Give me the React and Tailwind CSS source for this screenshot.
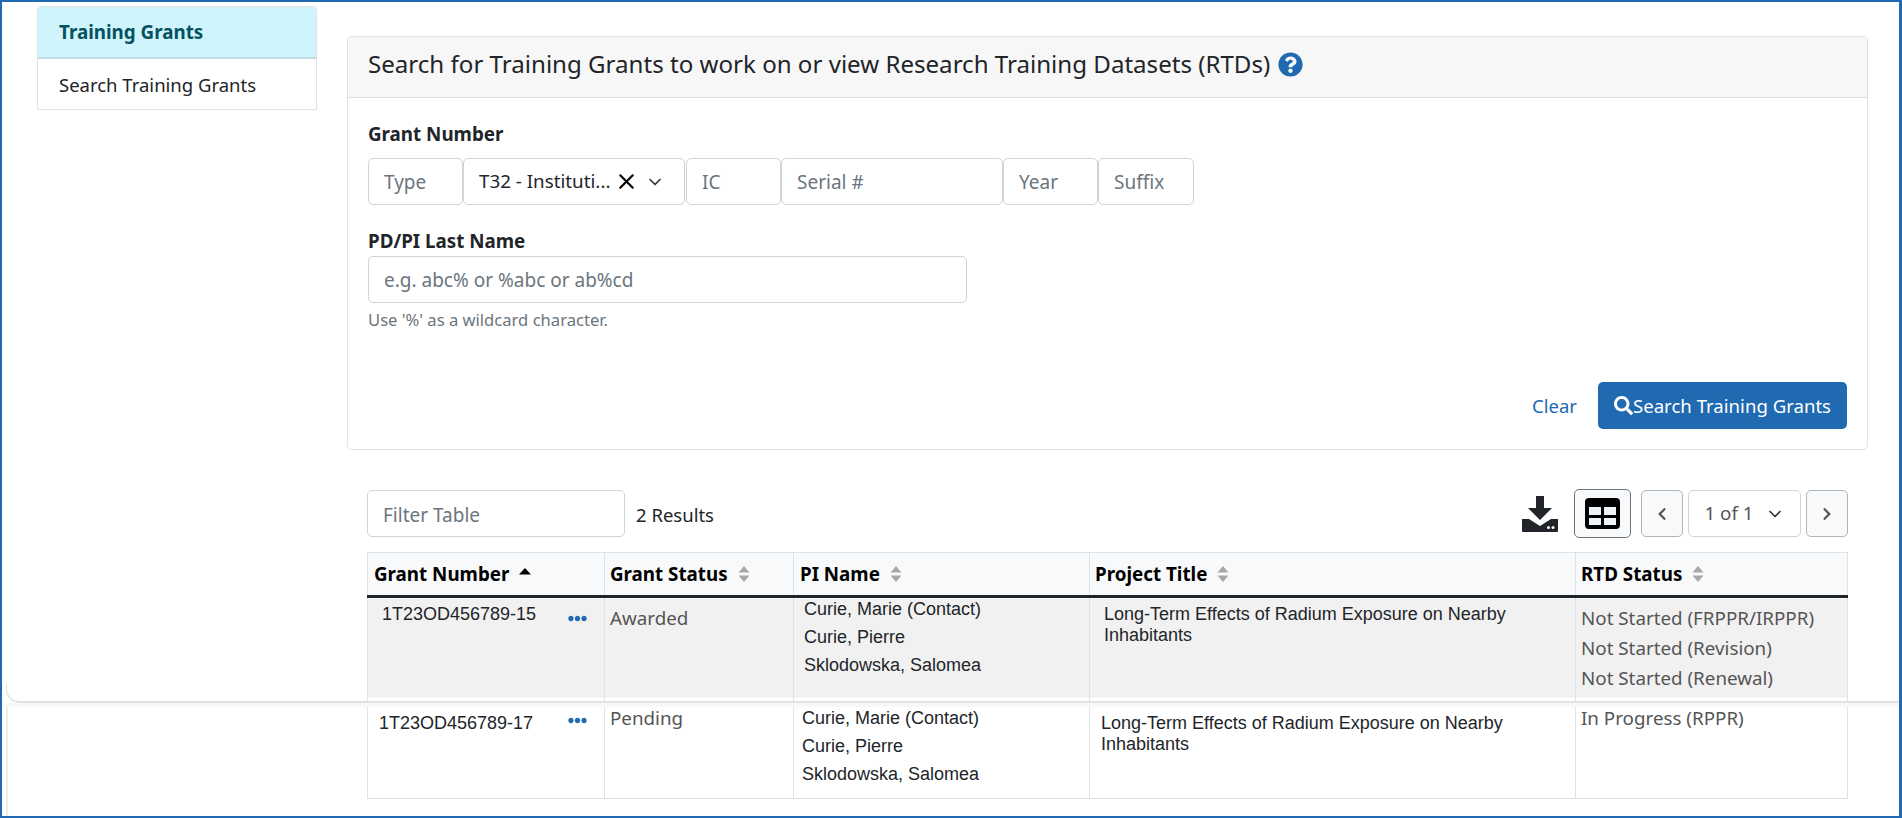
import { ChevronDown, X } from 'lucide-react';
import { FaChevronLeft, FaChevronRight, FaEllipsisH, FaQuestionCircle, FaSearch } from 'react-icons/fa';

const font = "[font-family:'Noto_Sans',sans-serif]";
const fieldClass = `h-[47px] rounded-[5px] border border-[#ced4da] bg-white px-[15px] text-[19px] text-[#212529] placeholder:text-[#6c757d] outline-none ${font}`;

const SortIcon = ({ up }) => (
  <svg width="14" height="18" viewBox="0 0 14 18" className="ml-[9px] shrink-0">
    {up ? (
      <path d="M7 3l6 6.500H1z" fill="#000" />
    ) : (
      <>
        <path d="M7 1l5.500 6.500h-11z" fill="#a8a8a8" />
        <path d="M7 17l5.500-6.500h-11z" fill="#a8a8a8" />
      </>
    )}
  </svg>
);

const HeaderCell = ({ title, up, pl }) => (
  <th className={`h-[44px] border border-[#dee2e6] border-b-[3px] border-b-[#212529] bg-[#f8f9fa] p-0 text-left ${pl}`}>
    <span className="flex items-center text-[18.800px] font-bold text-black">
      {title}
      <SortIcon up={up} />
    </span>
  </th>
);

const DownloadIcon = () => (
  <svg width="36" height="36" viewBox="0 0 36 36" className="shrink-0">
    <path d="M14 0h8v12h8L18 24 6 12h8z" fill="#212529" />
    <path d="M0 23h7l11 7 11-7h7v12a1 1 0 0 1-1 1H1a1 1 0 0 1-1-1z" fill="#212529" />
    <circle cx="26.500" cy="31.500" r="1.500" fill="#fff" />
    <circle cx="31" cy="31.500" r="1.500" fill="#fff" />
  </svg>
);

const TableIcon = () => (
  <svg width="35" height="31" viewBox="0 0 35 31">
    <rect width="35" height="31" rx="4" fill="#000" />
    <rect x="4" y="9" width="12" height="8" fill="#eef3f8" />
    <rect x="19" y="9" width="12" height="8" fill="#eef3f8" />
    <rect x="4" y="20" width="12" height="7" fill="#eef3f8" />
    <rect x="19" y="20" width="12" height="7" fill="#eef3f8" />
  </svg>
);

const names = ['Curie, Marie (Contact)', 'Curie, Pierre', 'Sklodowska, Salomea'];
const arial = "[font-family:'Liberation_Sans',sans-serif]";
const rowOne = 'border border-[#dee2e6] bg-[linear-gradient(#f1f1f1_99px,#fff_99px)]';

const App = () => {
  return (
    <div className={`relative flex h-[818px] overflow-hidden border-t-2 border-r-[3px] border-b-2 border-l-2 border-[#1f6ab0] bg-white text-[#212529] ${font}`}>
      <aside className="ml-[35px] mt-[4px] h-[104px] w-[280px] shrink-0 rounded-t-[4px] border border-[#dfe3e6]">
        <div className="flex h-[52px] items-center rounded-t-[4px] border-b-2 border-[#bcdde6] bg-[#cff4fc] pl-[21px] text-[18.800px] font-bold text-[#055160]">
          Training Grants
        </div>
        <div className="flex h-[50px] items-center pl-[21px] pt-[2px] text-[18.500px]">Search Training Grants</div>
      </aside>

      <main className="ml-[30px] mt-[34px] w-[1521px] shrink-0">
        <section className="rounded-[5px] border border-[#e2e2e2]">
          <header className="flex h-[61px] items-center gap-[8px] rounded-t-[5px] border-b border-[#dfdfdf] bg-[#f7f7f7] pb-[5px] pl-[20px] text-[24.100px]">
            <h1 className="font-normal">Search for Training Grants to work on or view Research Training Datasets (RTDs)</h1>
            <FaQuestionCircle className="size-[25px] text-[#1f6ab0]" />
          </header>

          <div className="px-[20px] pb-[20px] pt-[23px]">
            <label className="block text-[18.800px] font-bold leading-[27px]">Grant Number</label>
            <div className="mt-[10px] flex">
              <input placeholder="Type" className={`${fieldClass} w-[95px]`} />
              <div className="flex h-[47px] w-[222px] items-center rounded-[5px] border border-[#ced4da] pl-[15px] pr-[12px] text-[18.800px]">
                <span>T32 - Instituti...</span>
                <X className="ml-[4px] size-[25px] shrink-0 text-black" strokeWidth={2} />
                <ChevronDown className="ml-[6px] size-[20px] shrink-0 text-[#333]" strokeWidth={2} />
              </div>
              <input placeholder="IC" className={`${fieldClass} ml-px w-[95px]`} />
              <input placeholder="Serial #" className={`${fieldClass} w-[222px]`} />
              <input placeholder="Year" className={`${fieldClass} w-[95px]`} />
              <input placeholder="Suffix" className={`${fieldClass} w-[96px]`} />
            </div>

            <label className="mt-[23px] block text-[18.800px] font-bold leading-[27px]">PD/PI Last Name</label>
            <input placeholder="e.g. abc% or %abc or ab%cd" className={`${fieldClass} mt-px block w-[599px]`} />
            <p className="mt-[5px] text-[16.600px] leading-[24px] text-[#6c757d]">Use '%' as a wildcard character.</p>

            <div className="mt-[50px] flex items-center justify-end">
              <a className="mr-[21px] text-[18.500px] text-[#1f6ab0]">Clear</a>
              <button className="flex h-[47px] w-[249px] items-center justify-center rounded-[5px] bg-[#1f6ab0] text-[18.600px] text-white">
                <FaSearch className="size-[19px]" />
                Search Training Grants
              </button>
            </div>
          </div>
        </section>

        <div className="mx-[20px] mt-[39px] flex h-[49px] items-center">
          <input placeholder="Filter Table" className={`${fieldClass} w-[258px] pt-[2px]`} />
          <span className="ml-[11px] pt-[2px] text-[18.500px]">2 Results</span>
          <div className="ml-auto flex items-center">
            <DownloadIcon />
            <button className="ml-[16px] flex h-[49px] w-[57px] items-center justify-center rounded-[5px] border border-[#6c757d] bg-[#f8f9fa]">
              <TableIcon />
            </button>
            <button className="ml-[10px] flex h-[47px] w-[42px] items-center justify-center rounded-[5px] border border-[#adb5bd] bg-[#f8f9fa] text-[#555]">
              <FaChevronLeft className="size-[14px]" />
            </button>
            <div className="ml-[5px] flex h-[47px] w-[113px] items-center justify-center gap-[11px] rounded-[5px] border border-[#ced4da] text-[18.800px] text-[#555]">
              1 of 1
              <ChevronDown className="size-[20px] text-[#333]" />
            </div>
            <button className="ml-[5px] flex h-[47px] w-[42px] items-center justify-center rounded-[5px] border border-[#adb5bd] bg-[#f8f9fa] text-[#555]">
              <FaChevronRight className="size-[14px]" />
            </button>
          </div>
        </div>

        <table className="mx-[20px] mt-[14px] w-[1480px] table-fixed border-collapse">
          <colgroup>
            <col className="w-[237px]" />
            <col className="w-[189px]" />
            <col className="w-[296px]" />
            <col className="w-[486px]" />
            <col className="w-[272px]" />
          </colgroup>
          <thead>
            <tr>
              <HeaderCell title="Grant Number" up pl="pl-[6px]" />
              <HeaderCell title="Grant Status" pl="pl-[5px]" />
              <HeaderCell title="PI Name" pl="pl-[6px]" />
              <HeaderCell title="Project Title" pl="pl-[5px]" />
              <HeaderCell title="RTD Status" pl="pl-[5px]" />
            </tr>
          </thead>
          <tbody>
            <tr className="h-[106px] align-top">
              <td className={`${rowOne} pl-[14px] pr-[17px] pt-[6px] text-[18px] leading-[20px] ${arial}`}>
                <div className="flex justify-between">
                  1T23OD456789-15
                  <FaEllipsisH className="mt-[5px] size-[19px] text-[#1f6ab0]" />
                </div>
              </td>
              <td className={`${rowOne} pl-[5px] pt-[6px] text-[18.800px] leading-[28px] text-[#555]`}>Awarded</td>
              <td className={`${rowOne} pl-[10px] text-[18px] leading-[24px] ${arial}`}>
                <div className="-mt-px">
                  {names.map(n => <div key={n} className="mb-[4px]">{n}</div>)}
                </div>
              </td>
              <td className={`${rowOne} pl-[14px] pr-[40px] pt-[6px] text-[18px] leading-[21px] ${arial}`}>
                Long-Term Effects of Radium Exposure on Nearby Inhabitants
              </td>
              <td className={`${rowOne} pl-[5px] pt-[5px] text-[18.800px] leading-[30px] text-[#555]`}>
                <div>Not Started (FRPPR/IRPPR)</div>
                <div>Not Started (Revision)</div>
                <div>Not Started (Renewal)</div>
              </td>
            </tr>
            <tr className="h-[96px] align-top">
              <td className={`border border-[#dee2e6] pl-[11px] pr-[17px] pt-[10px] text-[18px] leading-[20px] ${arial}`}>
                <div className="flex justify-between">
                  1T23OD456789-17
                  <FaEllipsisH className="-mt-[2px] size-[19px] text-[#1f6ab0]" />
                </div>
              </td>
              <td className="border border-[#dee2e6] pl-[5px] pt-[1px] text-[18.800px] leading-[28px] text-[#555]">Pending</td>
              <td className={`border border-[#dee2e6] pl-[8px] pt-[3px] text-[18px] leading-[24px] ${arial}`}>
                {names.map(n => <div key={n} className="mb-[4px]">{n}</div>)}
              </td>
              <td className={`border border-[#dee2e6] pl-[11px] pr-[40px] pt-[10px] text-[18px] leading-[21px] ${arial}`}>
                Long-Term Effects of Radium Exposure on Nearby Inhabitants
              </td>
              <td className="border border-[#dee2e6] pl-[5px] pt-[1px] text-[18.800px] leading-[28px] text-[#555]">In Progress (RPPR)</td>
            </tr>
          </tbody>
        </table>
      </main>

      {/* edge of the upper sheet, lies over the table */}
      <div className="pointer-events-none absolute left-[4px] right-0 top-[682px] h-[19px] rounded-bl-[14px] border-b-2 border-l border-[#e2e2e2]" />
      <div className="pointer-events-none absolute left-0 right-0 top-[701px] h-[4px] bg-[#f8f8f8]" />
      <div className="pointer-events-none absolute bottom-0 left-[4px] top-[705px] w-[2px] bg-[#efefef]" />
    </div>
  );
};

export default App;
